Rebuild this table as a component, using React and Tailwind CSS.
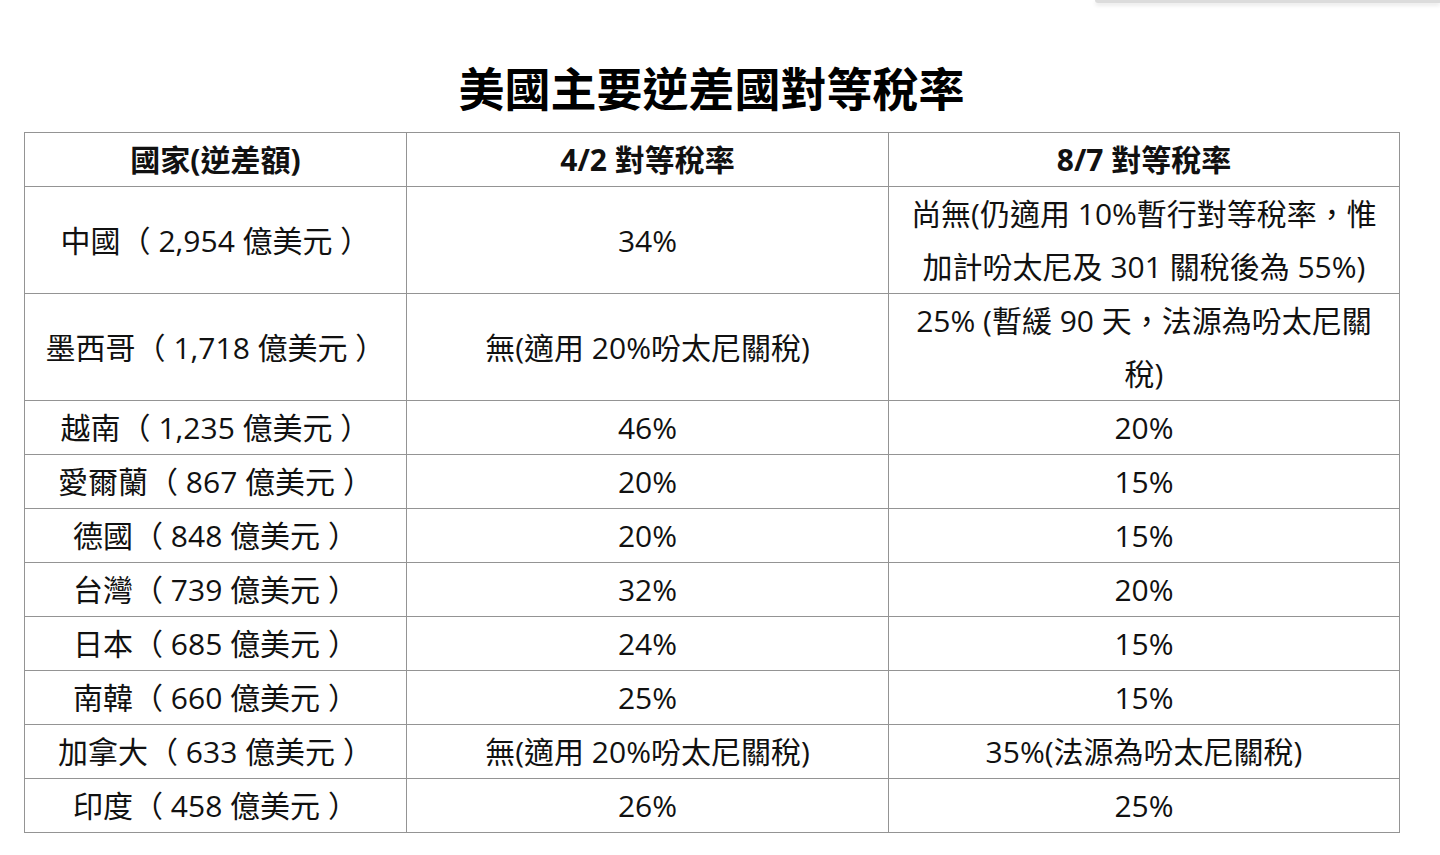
export default function App() {
  const rows = [
    ['中國（ 2,954 億美元 ）', '34%', '尚無(仍適用 10%暫行對等稅率，惟加計吩太尼及 301 關稅後為 55%)'],
    ['墨西哥（ 1,718 億美元 ）', '無(適用 20%吩太尼關稅)', '25% (暫緩 90 天，法源為吩太尼關稅)'],
    ['越南（ 1,235 億美元 ）', '46%', '20%'],
    ['愛爾蘭（ 867 億美元 ）', '20%', '15%'],
    ['德國（ 848 億美元 ）', '20%', '15%'],
    ['台灣（ 739 億美元 ）', '32%', '20%'],
    ['日本（ 685 億美元 ）', '24%', '15%'],
    ['南韓（ 660 億美元 ）', '25%', '15%'],
    ['加拿大（ 633 億美元 ）', '無(適用 20%吩太尼關稅)', '35%(法源為吩太尼關稅)'],
    ['印度（ 458 億美元 ）', '26%', '25%'],
  ]

  return (
    <div lang="zh-Hant-TW" className="relative min-h-[855px] bg-white text-[#111] font-['Open_Sans','Noto_Sans_CJK_TC',sans-serif]">
      {/* popover edge peeking in at the top */}
      <div className="absolute right-0 top-0 w-[345px] h-[3px] bg-[#dcdcdc] rounded-bl-[6px] shadow-[0_2px_4px_rgba(0,0,0,0.12)]" />

      <div className="ml-[24px] pt-[60px] w-[1375px]">
        <h1 className="text-center text-[46px] leading-[56px] font-bold text-black mb-[16px]">美國主要逆差國對等稅率</h1>

        <table className="w-[1375px] border-collapse table-fixed text-[30px] leading-[53px]">
          <colgroup>
            <col className="w-[382px]" />
            <col className="w-[482px]" />
            <col className="w-[511px]" />
          </colgroup>
          <thead>
            <tr>
              <th className="border border-[#949494] font-bold text-center px-2 py-0">國家(逆差額)</th>
              <th className="border border-[#949494] font-bold text-center px-2 py-0">4/2 對等稅率</th>
              <th className="border border-[#949494] font-bold text-center px-2 py-0">8/7 對等稅率</th>
            </tr>
          </thead>
          <tbody>
            {rows.map((r, i) => (
              <tr key={i}>
                {r.map((c, j) => (
                  <td key={j} className="border border-[#949494] text-center align-middle px-2 py-0">{c}</td>
                ))}
              </tr>
            ))}
          </tbody>
        </table>
      </div>
    </div>
  )
}
